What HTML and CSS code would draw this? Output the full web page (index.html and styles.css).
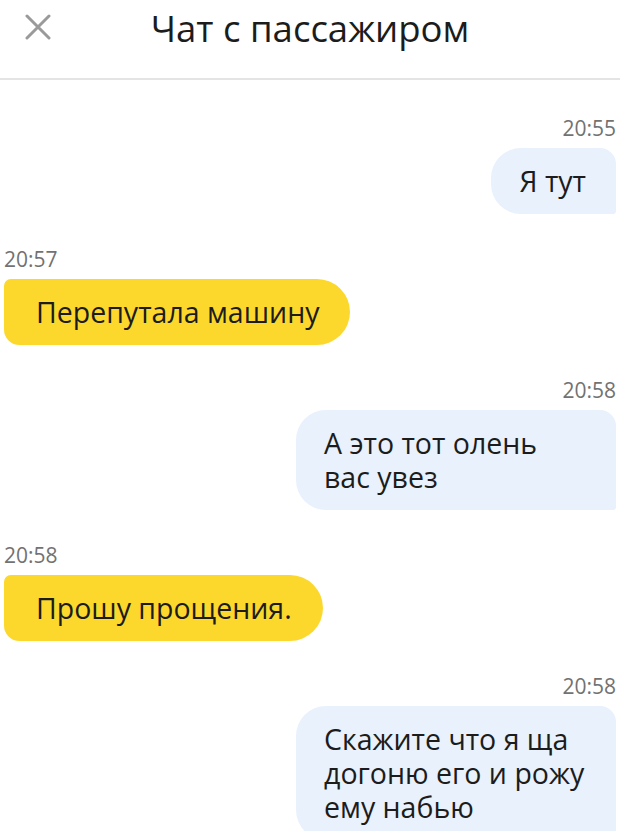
FILE: index.html
```html
<!DOCTYPE html>
<html lang="ru">
<head>
    <meta charset="UTF-8">
    <meta name="viewport" content="width=device-width, initial-scale=1.0">
    <title>Чат с пассажиром</title>
    <link rel="stylesheet" href="styles.css">
</head>
<body>
    <div class="header">
        <button class="close" type="button" aria-label="Закрыть">
            <svg width="26" height="26" viewBox="0 0 26 26">
                <path d="M2 2 L24 24 M24 2 L2 24" stroke="#9a9a9a" stroke-width="3" stroke-linecap="round" fill="none"/>
            </svg>
        </button>
        <h1>Чат с пассажиром</h1>
    </div>

    <div class="chat">
        <div class="msg out">
            <div class="time">20:55</div>
            <div class="bubble">Я тут</div>
        </div>
        <div class="msg in">
            <div class="time">20:57</div>
            <div class="bubble">Перепутала машину</div>
        </div>
        <div class="msg out">
            <div class="time">20:58</div>
            <div class="bubble">А это тот олень вас увез</div>
        </div>
        <div class="msg in">
            <div class="time">20:58</div>
            <div class="bubble">Прошу прощения.</div>
        </div>
        <div class="msg out">
            <div class="time">20:58</div>
            <div class="bubble">Скажите что я ща догоню его и рожу ему набью</div>
        </div>
    </div>
</body>
</html>
```

FILE: styles.css
```css
body {
    font-family: "Open Sans", "Noto Sans", sans-serif;
    margin: 0;
    background-color: #fff;
    color: #1c1c1c;
    overflow: hidden;
}
.header {
    position: relative;
    height: 78px;
    border-bottom: 2px solid #e4e4e4;
    display: flex;
    align-items: flex-start;
    justify-content: center;
}
.close {
    position: absolute;
    left: 25px;
    top: 14px;
    padding: 0;
    border: none;
    background: none;
    cursor: pointer;
}
h1 {
    margin: 0;
    padding-top: 3px;
    font-size: 36.5px;
    font-weight: 400;
}
.chat {
    display: flex;
    flex-direction: column;
    padding: 34px 4px 0;
}
.msg {
    display: flex;
    flex-direction: column;
    margin-top: 31px;
}
.msg:first-child {
    margin-top: 0;
}
.msg.out {
    align-items: flex-end;
}
.msg.in {
    align-items: flex-start;
}
.time {
    font-size: 21px;
    line-height: 28px;
    color: #727272;
    margin-bottom: 6px;
}
.bubble {
    box-sizing: border-box;
    font-size: 28.5px;
    line-height: 34px;
}
.out .bubble {
    max-width: 320px;
    padding: 16px 30px 16px 28px;
    background-color: #e8f1fc;
    border-radius: 30px 16px 3px 30px;
}
.in .bubble {
    padding: 16px 31px 16px 32px;
    background-color: #fcd82d;
    border-radius: 7px 34px 34px 16px;
}
```
